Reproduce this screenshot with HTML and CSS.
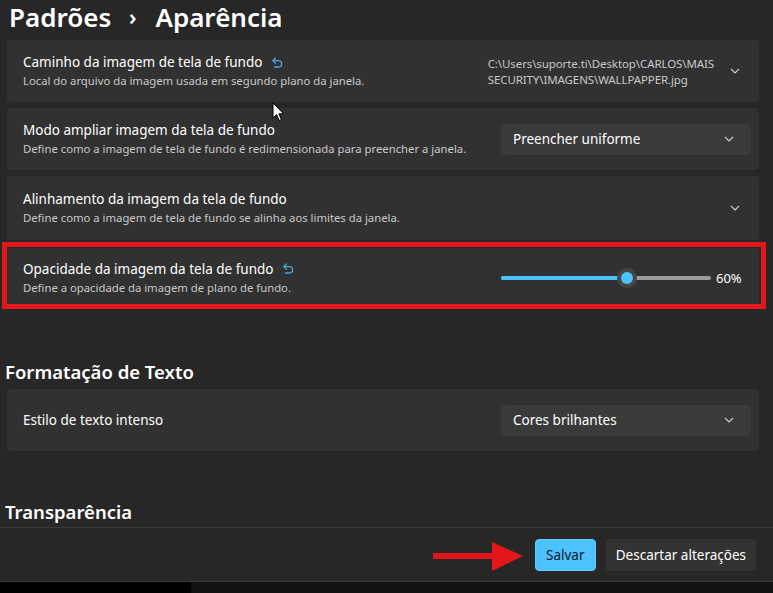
FILE: index.html
```html
<!DOCTYPE html>
<html>

<head>
  <title>Padrões - Aparência</title>
  <link rel="stylesheet" href="styles.css">
</head>

<body>
  <div class="page">
    <div class="content">
      <h1 class="crumbs">Padrões <span class="crumb-sep">&#8250;</span> Aparência</h1>

      <div class="card-list">
        <div class="card">
          <div class="card-text">
            <div class="card-title">Caminho da imagem de tela de fundo
              <svg class="revert" width="12" height="12" viewBox="0 0 12 12">
                <path d="M4.5 1 L1.8 3.6 L4.5 6.2" />
                <path d="M2 3.6 H7.4 A3.2 3.2 0 0 1 7.4 10 H3.5" />
              </svg>
            </div>
            <div class="card-desc">Local do arquivo da imagem usada em segundo plano da janela.</div>
          </div>
          <div class="path-value">C:\Users\suporte.ti\Desktop\CARLOS\MAIS<br>SECURITY\IMAGENS\WALLPAPPER.jpg</div>
          <svg class="chevron expander" width="10" height="6" viewBox="0 0 10 6">
            <path d="M1 1 L5 5 L9 1" />
          </svg>
        </div>

        <div class="card">
          <div class="card-text">
            <div class="card-title">Modo ampliar imagem da tela de fundo</div>
            <div class="card-desc">Define como a imagem de tela de fundo é redimensionada para preencher a janela.</div>
          </div>
          <div class="combo">
            <span>Preencher uniforme</span>
            <svg class="chevron" width="10" height="6" viewBox="0 0 10 6">
              <path d="M1 1 L5 5 L9 1" />
            </svg>
          </div>
        </div>

        <div class="card card-tall">
          <div class="card-text">
            <div class="card-title">Alinhamento da imagem da tela de fundo</div>
            <div class="card-desc">Define como a imagem de tela de fundo se alinha aos limites da janela.</div>
          </div>
          <svg class="chevron expander" width="10" height="6" viewBox="0 0 10 6">
            <path d="M1 1 L5 5 L9 1" />
          </svg>
        </div>

        <div class="card card-marked">
          <div class="card-text">
            <div class="card-title">Opacidade da imagem da tela de fundo
              <svg class="revert" width="12" height="12" viewBox="0 0 12 12">
                <path d="M4.5 1 L1.8 3.6 L4.5 6.2" />
                <path d="M2 3.6 H7.4 A3.2 3.2 0 0 1 7.4 10 H3.5" />
              </svg>
            </div>
            <div class="card-desc">Define a opacidade da imagem de plano de fundo.</div>
          </div>
          <div class="slider">
            <div class="slider-fill" style="width: 60%"></div>
            <div class="slider-thumb" style="left: 60%"></div>
          </div>
          <div class="slider-value">60%</div>
          <div class="mark-box"></div>
        </div>
      </div>

      <h2 class="section-title">Formatação de Texto</h2>
      <div class="card-list">
        <div class="card">
          <div class="card-text">
            <div class="card-title">Estilo de texto intenso</div>
          </div>
          <div class="combo">
            <span>Cores brilhantes</span>
            <svg class="chevron" width="10" height="6" viewBox="0 0 10 6">
              <path d="M1 1 L5 5 L9 1" />
            </svg>
          </div>
        </div>
      </div>

      <h2 class="section-title section-last">Transparência</h2>

      <svg class="cursor" width="13" height="20" viewBox="0 0 13 20">
        <path d="M1 1 L1 16 L4.6 12.6 L7.2 18.6 L9.4 17.6 L6.9 11.8 L11.6 11.8 Z" />
      </svg>
    </div>

    <div class="footer">
      <svg class="arrow" width="90" height="30" viewBox="0 0 90 30">
        <rect x="0" y="11" width="62" height="6" />
        <polygon points="59,0 90,14 59,29" />
      </svg>
      <button class="btn btn-accent">Salvar</button>
      <button class="btn">Descartar alterações</button>
    </div>

    <div class="taskbar">
      <div class="taskbar-left"></div>
    </div>
  </div>
</body>

</html>
```

FILE: styles.css
```css
body {
  margin: 0;
  background-color: #272727;
  color: #ffffff;
  font-family: "Noto Sans", "Open Sans", sans-serif;
}

.page {
  height: 593px;
  display: flex;
  flex-direction: column;
  overflow: hidden;
}

.content {
  flex: 1;
  overflow: hidden;
  position: relative;
}

.crumbs {
  margin: 0;
  padding-left: 9px;
  font-size: 26px;
  font-weight: 600;
  line-height: 40px;
  height: 40px;
  margin-top: -3px;
  margin-bottom: 3px;
}

.crumb-sep {
  display: inline-block;
  margin: 0 12px 0 11px;
  font-size: 22px;
  position: relative;
  top: -2px;
}

.card-list {
  display: flex;
  flex-direction: column;
  gap: 6px;
  margin: 0 14px 0 7px;
}

.card {
  background-color: #313131;
  border-radius: 4px;
  height: 62px;
  display: flex;
  align-items: center;
  padding: 0 8px 0 16px;
  box-sizing: border-box;
  position: relative;
}

.card-tall {
  height: 64px;
}

.card-text {
  flex: 1;
}

.card-title {
  font-size: 13.5px;
  line-height: 19px;
  display: flex;
  align-items: center;
  gap: 9px;
}

.card-desc {
  font-size: 11.3px;
  line-height: 17px;
  color: #c8c8c8;
}

.revert {
  fill: none;
  stroke: #4fa6dc;
  stroke-width: 1.3;
  stroke-linecap: round;
  stroke-linejoin: round;
}

.chevron {
  fill: none;
  stroke: #d0d0d0;
  stroke-width: 1.1;
}

.expander {
  margin: 0 11px 0 16px;
}

.path-value {
  font-size: 11.5px;
  line-height: 16px;
  color: #c8c8c8;
  letter-spacing: -0.1px;
  padding-top: 2px;
}

.combo {
  width: 250px;
  height: 31px;
  background-color: #3a3a3a;
  border-radius: 4px;
  display: flex;
  align-items: center;
  justify-content: space-between;
  padding: 0 17px 0 12px;
  box-sizing: border-box;
  font-size: 13.5px;
}

.slider {
  position: relative;
  width: 210px;
  height: 4px;
  border-radius: 2px;
  background-color: #9b9b9b;
  margin-right: 5px;
}

.slider-fill {
  height: 100%;
  border-radius: 2px;
  background-color: #4cc2ff;
}

.slider-thumb {
  position: absolute;
  top: 50%;
  width: 20px;
  height: 20px;
  margin: -10px 0 0 -10px;
  border-radius: 50%;
  background-color: #454545;
  box-sizing: border-box;
  border: 4px solid #454545;
}

.slider-thumb::after {
  content: "";
  display: block;
  width: 12px;
  height: 12px;
  border-radius: 50%;
  background-color: #4cc2ff;
}

.slider-value {
  font-size: 13px;
  width: 27px;
  margin-right: 8px;
}

.card-marked {
  margin-top: 2px;
  height: 59px;
}

.mark-box {
  position: absolute;
  left: -5px;
  right: -7px;
  top: -6px;
  bottom: -2px;
  border: 5px solid #e3161b;
  pointer-events: none;
}

.section-title {
  margin: 51px 0 3px 5px;
  font-size: 18.5px;
  font-weight: 600;
  line-height: 28px;
}

.section-last {
  margin-top: 48px;
  line-height: 25px;
}

.cursor {
  position: absolute;
  left: 272px;
  top: 102px;
  fill: #ffffff;
  stroke: #000000;
  stroke-width: 1;
}

.footer {
  height: 55px;
  box-sizing: border-box;
  border-top: 1px solid #3a3a3a;
  border-bottom: 1px solid #3a3a3a;
  background-color: #272727;
  display: flex;
  align-items: center;
  justify-content: flex-end;
  gap: 10px;
  padding-right: 17px;
  position: relative;
}

.arrow {
  position: absolute;
  left: 433px;
  top: 14px;
  fill: #e3161b;
}

.btn {
  height: 32px;
  border: none;
  border-radius: 4px;
  background-color: #333333;
  color: #ffffff;
  font-family: "Noto Sans", "Open Sans", sans-serif;
  font-size: 13.5px;
  padding: 0 10px;
}

.btn-accent {
  background-color: #4cc2ff;
  color: #0a1a24;
  width: 61px;
  border: 1px solid #5fcbff;
}

.taskbar {
  height: 11px;
  background-color: #121212;
}

.taskbar-left {
  width: 191px;
  height: 100%;
  background-color: #000000;
}
```
